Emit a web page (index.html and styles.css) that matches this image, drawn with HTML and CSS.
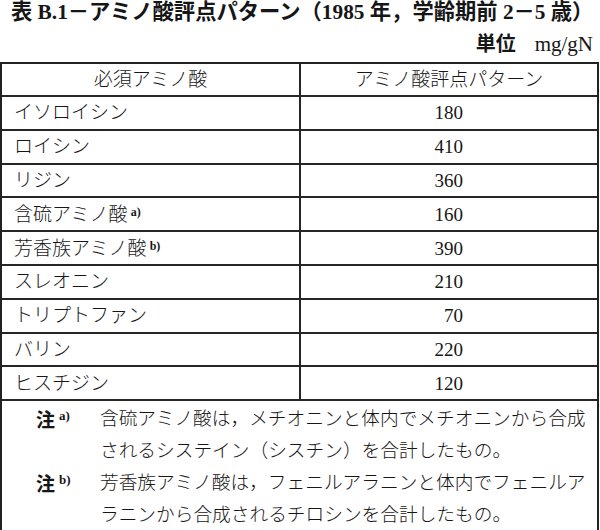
FILE: index.html
```html
<!DOCTYPE html>
<html lang="ja">
<head>
<meta charset="utf-8">
<title>表 B.1 アミノ酸評点パターン</title>
<link rel="stylesheet" href="styles.css">
</head>
<body>
<header class="caption">
  <h1 class="title">表 B.1－アミノ酸評点パターン（1985 年，学齢期前 2－5 歳）</h1>
  <div class="unit"><span class="unit-label">単位</span>　<span class="unit-value">mg/gN</span></div>
</header>
<table class="pattern">
  <thead>
    <tr><th class="col-name">必須アミノ酸</th><th class="col-val">アミノ酸評点パターン</th></tr>
  </thead>
  <tbody>
    <tr><td class="name">イソロイシン</td><td class="num">180</td></tr>
    <tr><td class="name">ロイシン</td><td class="num">410</td></tr>
    <tr><td class="name">リジン</td><td class="num">360</td></tr>
    <tr><td class="name">含硫アミノ酸<sup class="ref">a)</sup></td><td class="num">160</td></tr>
    <tr><td class="name">芳香族アミノ酸<sup class="ref">b)</sup></td><td class="num">390</td></tr>
    <tr><td class="name">スレオニン</td><td class="num">210</td></tr>
    <tr><td class="name">トリプトファン</td><td class="num">70</td></tr>
    <tr><td class="name">バリン</td><td class="num">220</td></tr>
    <tr><td class="name">ヒスチジン</td><td class="num">120</td></tr>
  </tbody>
  <tfoot>
    <tr>
      <td colspan="2" class="notes">
        <div class="note">
          <span class="note-label">注<sup class="note-ref">a)</sup></span>
          <p class="note-text">含硫アミノ酸は，メチオニンと体内でメチオニンから合成<br>されるシステイン（シスチン）を合計したもの。</p>
        </div>
        <div class="note">
          <span class="note-label">注<sup class="note-ref">b)</sup></span>
          <p class="note-text">芳香族アミノ酸は，フェニルアラニンと体内でフェニルア<br>ラニンから合成されるチロシンを合計したもの。</p>
        </div>
      </td>
    </tr>
  </tfoot>
</table>
</body>
</html>
```

FILE: styles.css
```css
html, body {
  margin: 0;
  padding: 0;
  background: #ffffff;
}

body {
  width: 600px;
  height: 530px;
  overflow: hidden;
  color: #161616;
  font-family: "Liberation Serif", "Noto Sans CJK JP", serif;
  font-size: 19px;
}

.caption {
  margin: 0 0 5px 0;
}

.title {
  margin: 0;
  padding-left: 11px;
  font-size: 21.3px;
  line-height: 25px;
  font-weight: 700;
  white-space: nowrap;
}

.unit {
  margin-top: 6px;
  line-height: 24px;
  text-align: right;
  padding-right: 7px;
}

.unit-label {
  font-family: "Noto Sans CJK JP", sans-serif;
  font-weight: 700;
  font-size: 20px;
}

.unit-value {
  font-size: 21px;
}

.pattern {
  width: 599px;
  border-collapse: separate;
  border-spacing: 0;
  border: 2px solid #222222;
  table-layout: fixed;
}

.pattern th,
.pattern td {
  box-sizing: border-box;
  padding: 0;
  border-bottom: 2px solid #262626;
  height: 33.8px;
  line-height: 31px;
  font-weight: 300;
  vertical-align: middle;
}

.pattern thead th {
  height: 32px;
  text-align: center;
}

.pattern .col-name {
  width: 299px;
}

.pattern th.col-name,
.pattern td.name {
  border-right: 2px solid #262626;
}

.pattern td.name {
  padding-left: 12px;
  text-align: left;
}

.pattern td.num {
  text-align: right;
  padding-right: 134px;
}

.ref {
  font-weight: 700;
  font-size: 12px;
  line-height: 0;
  vertical-align: 5px;
  margin-left: 3px;
}

.pattern td.notes {
  height: auto;
  border-bottom: none;
  padding: 2px 0 0 34px;
  line-height: 31.8px;
}

.note {
  display: flex;
}

.note-label {
  flex: 0 0 64px;
  font-family: "Noto Sans CJK JP", sans-serif;
  font-weight: 700;
  font-size: 19px;
}

.note-ref {
  font-family: "Liberation Serif", serif;
  font-size: 13px;
  font-weight: 700;
  line-height: 0;
  vertical-align: 7px;
  margin-left: 4px;
}

.note-text {
  margin: 0;
  font-size: 18.7px;
  white-space: nowrap;
}
```
